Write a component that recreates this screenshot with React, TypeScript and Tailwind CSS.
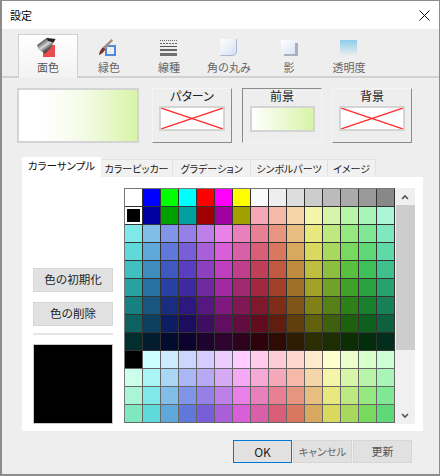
import React from "react";

const FONT = "font-['Noto_Sans_CJK_JP','Noto_Sans',sans-serif]";
const hues = [180, 204, 228, 252, 276, 300, 324, 348, 12, 36, 60, 84, 108, 132, 156];
const levels: Record<string, [number, number]> = {
  a: [0.2, 1],
  b: [0.31, 0.96],
  c: [0.45, 0.91],
  d: [0.56, 0.85],
  e: [0.67, 0.75],
  f: [0.75, 0.63],
  g: [0.81, 0.5],
  h: [0.87, 0.38],
  i: [0.93, 0.18],
};
function hsv(h: number, level: string) {
  const [s, v] = levels[level];
  const f = (n: number) => {
    const k = (n + h / 60) % 6;
    return Math.round(255 * (v - v * s * Math.max(0, Math.min(k, 4 - k, 1))));
  };
  return `rgb(${f(5)},${f(3)},${f(1)})`;
}
const row0 = ["#ffffff", "#0000ff", "#00ff00", "#00ffff", "#ff0000", "#ff00ff", "#ffff00", "#fbfbfb", "#eeeeee", "#dddddd", "#cccccc", "#bbbbbb", "#aaaaaa", "#999999", "#888888"];
const row1 = ["#000000", "#0000a0", "#00a000", "#00a0a0", "#a00000", "#a000a0", "#a0a000", ...hues.slice(7).map((h) => hsv(h, "b"))];
const rows: string[][] = [row0, row1];
for (const l of ["c", "d", "e", "f", "g", "h", "i"]) rows.push(hues.map((h) => hsv(h, l)));
const shifted = ["a", "b", "c", "d"];
rows.push(["#000000", ...hues.slice(0, 14).map((h) => hsv(h, "a"))]);
for (let i = 1; i < 4; i++) rows.push([hsv(156, shifted[i - 1]), ...hues.slice(0, 14).map((h) => hsv(h, shifted[i]))]);

function Crossed({ className }: { className: string }) {
  return (
    <div className={`border-2 border-[#d4d4d4] bg-white ${className}`}>
      <svg className="block h-full w-full" viewBox="0 0 100 100" preserveAspectRatio="none">
        <path d="M0 0L100 100M100 0L0 100" stroke="#ff3030" strokeWidth="1.3" vectorEffect="non-scaling-stroke" fill="none" />
      </svg>
    </div>
  );
}

function SwatchBox({ label, pressed, children }: { label: string; pressed?: boolean; children: React.ReactNode }) {
  return (
    <div className={`flex h-[55px] w-[80px] flex-col items-center border ${pressed ? "border-t-[#8a8a8a] border-l-[#8a8a8a] border-r-[#f4f4f4] border-b-[#f4f4f4]" : "border-t-[#f4f4f4] border-l-[#f4f4f4] border-r-[#8a8a8a] border-b-[#8a8a8a]"}`}>
      <span className="h-[17px] text-[12px] leading-[13px] text-[#222] [font-feature-settings:'palt']">{label}</span>
      {children}
    </div>
  );
}

const icons: React.ReactNode[] = [
  <svg key="0" width="20" height="20" viewBox="0 0 20 20" className="overflow-visible">
    <defs>
      <linearGradient id="m" x1="0.1" y1="0.1" x2="0.7" y2="0.8">
        <stop offset="0" stopColor="#1c1c1c" />
        <stop offset="0.35" stopColor="#8a8a8a" />
        <stop offset="0.55" stopColor="#d8d8d8" />
        <stop offset="0.8" stopColor="#666" />
        <stop offset="1" stopColor="#222" />
      </linearGradient>
    </defs>
    <rect x="5" y="6" width="12" height="12" fill="#e84c4c" />
    <path d="M-1 6L8.5 -1L17.5 0L12.5 9L7 14.5L0.5 10.5Z" fill="url(#m)" />
    <path d="M8.5 -1L17.5 0L15.5 3.5L10 2Z" fill="#222" />
  </svg>,
  <svg key="1" width="20" height="20" viewBox="0 0 20 20" className="overflow-visible">
    <rect x="7" y="7" width="9" height="9" fill="none" stroke="#4f8adf" strokeWidth="2" />
    <path d="M0 16C0 13 2 10 4 8L6.5 10C5 13 3 15 0 16Z" fill="#7a3528" />
    <path d="M4 8L12.5 0L14 1.5L6.5 10Z" fill="#a39088" />
  </svg>,
  <svg key="2" width="20" height="20" viewBox="0 0 20 20" shapeRendering="crispEdges">
    <path d="M1 1.5H18" stroke="#666" strokeDasharray="1 1" />
    <path d="M1 4.5H18" stroke="#666" strokeDasharray="2 1" />
    <rect x="1" y="7" width="17" height="1" fill="#555" />
    <rect x="1" y="10" width="17" height="2" fill="#666" />
    <rect x="1" y="14" width="17" height="3" fill="#707070" />
  </svg>,
  <svg key="3" width="20" height="20" viewBox="0 0 20 20">
    <defs>
      <linearGradient id="r" x1="0" y1="0" x2="1" y2="1">
        <stop offset="0" stopColor="#ffffff" />
        <stop offset="1" stopColor="#d5dff0" />
      </linearGradient>
    </defs>
    <path d="M1.5 0V16.5H13Q17.5 16.5 17.5 12V0Z" fill="url(#r)" />
    <path d="M1.5 16.5H13Q17.5 16.5 17.5 12V0" fill="none" stroke="#a8b6d4" strokeWidth="1" />
  </svg>,
  <svg key="4" width="20" height="20" viewBox="0 0 20 20">
    <defs>
      <linearGradient id="s" x1="0" y1="0" x2="1" y2="1">
        <stop offset="0" stopColor="#ffffff" />
        <stop offset="1" stopColor="#dbe4f4" />
      </linearGradient>
    </defs>
    <rect x="5" y="4" width="14" height="13" fill="#a9afbd" />
    <rect x="2" y="1" width="14" height="14" fill="url(#s)" />
  </svg>,
  <svg key="5" width="20" height="20" viewBox="0 0 20 20">
    <defs>
      <linearGradient id="t" x1="0" y1="0" x2="0" y2="1">
        <stop offset="0" stopColor="#8ccfeb" />
        <stop offset="1" stopColor="#eeeeee" />
      </linearGradient>
    </defs>
    <rect x="1" y="1" width="17" height="16" fill="url(#t)" />
  </svg>,
];
const topTabs = ["面色", "緑色", "線種", "角の丸み", "影", "透明度"];
const subTabs: [string, string][] = [
  ["カラーピッカー", "w-[72px]"],
  ["グラデーション", "w-[78px]"],
  ["シンボルパーツ", "w-[77px]"],
  ["イメージ", "w-[48px]"],
];

export default function App() {
  return (
    <div className={`flex h-[476px] w-[440px] flex-col overflow-hidden border-t border-r border-b-2 border-l-2 border-[#8c8c8c] bg-[#eeeeee] ${FONT}`}>
      <div className="flex h-[28px] shrink-0 items-center justify-between bg-white pr-[9px] pl-[8px]">
        <span className="text-[11px] leading-none text-black">設定</span>
        <svg width="11" height="11" viewBox="0 0 11 11">
          <path d="M0.5 0.5L10.5 10.5M10.5 0.5L0.5 10.5" stroke="#111" strokeWidth="1" fill="none" />
        </svg>
      </div>

      <div className="flex h-[49px] shrink-0 border-b-2 border-[#d2d2d2] pt-[5px] pl-[16px]">
        {topTabs.map((t, i) => (
          <div key={t} className={`flex w-[60px] flex-col items-center ${i === 0 ? "h-[44px] w-[59px] mr-[1px] border border-b-0 border-[#cfcfcf] bg-gradient-to-b from-white to-[#f2f2f2] pt-[4px]" : "h-[43px] pt-[5px]"}`}>
            {icons[i]}
            <span className={`mt-[1px] text-[11px] leading-[14px] whitespace-nowrap ${i === 0 ? "text-[#555]" : "text-[#666]"}`}>{t}</span>
          </div>
        ))}
      </div>

      <div className="flex shrink-0 pt-[10px] pl-[15px]">
        <div className="h-[55px] w-[122px] border-2 border-[#d4d4d4] bg-[linear-gradient(to_right,#ffffff_20%,#f4fbe6_55%,#d8f4a8_100%)]" />
        <div className="ml-[13px] flex gap-[10px]">
          <SwatchBox label="パターン">
            <Crossed className="h-[25px] w-[66px]" />
          </SwatchBox>
          <SwatchBox label="前景" pressed>
            <div className="h-[26px] w-[65px] border-2 border-[#d4d4d4] bg-[linear-gradient(to_right,#ffffff,#d8f4a8)]" />
          </SwatchBox>
          <SwatchBox label="背景">
            <Crossed className="h-[25px] w-[66px]" />
          </SwatchBox>
        </div>
      </div>

      <div className="mt-[14px] ml-[20px] flex h-[20px] w-[401px] shrink-0 items-end [font-feature-settings:'palt']">
        <div className="flex h-[20px] w-[79px] items-center justify-center bg-white pb-[1px] text-[10.5px] leading-none text-[#111] whitespace-nowrap">カラーサンプル</div>
        {subTabs.map(([t, w]) => (
          <div key={t} className={`flex h-[18px] items-center justify-center border-t border-r border-[#e2e2e2] bg-[#f1f1f1] text-[10px] leading-none text-[#222] whitespace-nowrap ${w}`}>{t}</div>
        ))}
      </div>

      <div className="ml-[20px] flex h-[254px] w-[401px] shrink-0 bg-white pt-[11px] pl-[11px]">
        <div className="flex h-[236px] w-[80px] flex-col justify-end">
          <div className="flex h-[24px] items-center justify-center border border-[#d6d6d6] bg-[#e1e1e1] text-[11.5px] text-[#222]">色の初期化</div>
          <div className="mt-[10px] flex h-[24px] items-center justify-center border border-[#d6d6d6] bg-[#e1e1e1] text-[11.5px] text-[#222]">色の削除</div>
          <div className="mt-[7px] h-[2px] bg-[#e6e6e6]" />
          <div className="mt-[9px] h-[80px] border border-[#c8c8c8] bg-black" />
        </div>

        <div className="ml-[11px] h-[235px] w-[271px] border-t border-l border-[#777] bg-[#333]">
          {rows.map((r, y) => (
            <div key={y} className={`flex h-[18px] ${y >= 9 ? "bg-[#666]" : ""}`}>
              {r.map((c, x) => (
                <div
                  key={x}
                  className={`h-[17px] w-[17px] mr-[1px] mb-[1px] shrink-0 ${y === 1 && x === 0 ? "border-2 border-white" : ""}`}
                  style={{ backgroundColor: c }}
                />
              ))}
            </div>
          ))}
        </div>

        <div className="flex h-[236px] w-[20px] flex-col items-center bg-[#f0f0f0]">
          <div className="flex h-[17px] items-center justify-center">
            <svg width="8" height="6" viewBox="0 0 8 6"><path d="M1 5L4 2L7 5" stroke="#555" strokeWidth="1.6" fill="none" /></svg>
          </div>
          <div className="h-[145px] w-[19px] bg-[#cdcdcd]" />
          <div className="flex-1" />
          <div className="flex h-[17px] items-center justify-center">
            <svg width="8" height="6" viewBox="0 0 8 6"><path d="M1 1L4 4L7 1" stroke="#555" strokeWidth="1.6" fill="none" /></svg>
          </div>
        </div>
      </div>

      <div className="mt-[9px] flex justify-end gap-[1px] pr-[27px]">
        <div className="flex h-[23px] w-[59px] items-center justify-center border border-[#0078d7] bg-[#e1e1e1] text-[12px] text-[#222]">OK</div>
        <div className="flex h-[23px] w-[59px] items-center justify-center border border-[#d6d6d6] bg-[#e1e1e1] text-[10.5px] text-[#666] [font-feature-settings:'palt']">キャンセル</div>
        <div className="flex h-[23px] w-[59px] items-center justify-center border border-[#d6d6d6] bg-[#e1e1e1] text-[11px] text-[#555]">更新</div>
      </div>
    </div>
  );
}
